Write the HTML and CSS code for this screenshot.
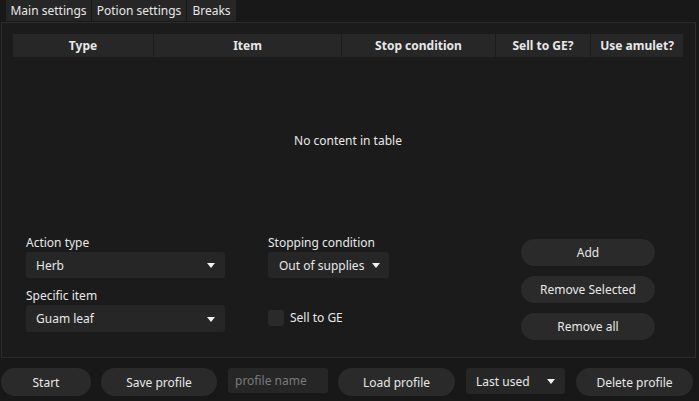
FILE: index.html
```html
<!DOCTYPE html>
<html>
<head>
<meta charset="utf-8">
<link rel="stylesheet" href="styles.css">
</head>
<body>
<div class="tabs">
  <div class="tab t1">Main settings</div>
  <div class="tab t2">Potion settings</div>
  <div class="tab t3">Breaks</div>
</div>
<div class="panel">
  <div class="table">
    <div class="thead">
      <div class="th c1">Type</div>
      <div class="th c2">Item</div>
      <div class="th c3">Stop condition</div>
      <div class="th c4">Sell to GE?</div>
      <div class="th c5">Use amulet?</div>
    </div>
    <div class="tbody">No content in table</div>
  </div>
  <div class="form">
    <div class="col col1">
      <div class="label">Action type</div>
      <div class="select wide"><span>Herb</span><i class="arrow"></i></div>
      <div class="label second">Specific item</div>
      <div class="select wide tall"><span>Guam leaf</span><i class="arrow"></i></div>
    </div>
    <div class="col col2">
      <div class="label">Stopping condition</div>
      <div class="select narrow"><span>Out of supplies</span><i class="arrow"></i></div>
      <div class="check"><span class="box"></span><span>Sell to GE</span></div>
    </div>
    <div class="col col3">
      <div class="btn side">Add</div>
      <div class="btn side">Remove Selected</div>
      <div class="btn side">Remove all</div>
    </div>
  </div>
</div>
<div class="bottom">
  <div class="btn b-start">Start</div>
  <div class="btn b-save">Save profile</div>
  <div class="input">profile name</div>
  <div class="btn b-load">Load profile</div>
  <div class="select last"><span>Last used</span><i class="arrow"></i></div>
  <div class="btn b-del">Delete profile</div>
</div>
</body>
</html>
```
FILE: styles.css
```css
* { box-sizing: border-box; }
html, body { margin: 0; padding: 0; }
body {
  width: 699px;
  height: 401px;
  background: #181818;
  color: #e8e8e8;
  font-family: "Noto Sans", "DejaVu Sans", sans-serif;
  font-size: 12px;
  overflow: hidden;
}
.tabs {
  display: flex;
  height: 22px;
  padding-left: 6px;
  gap: 1px;
}
.tab {
  background: #262626;
  height: 21px;
  line-height: 21px;
  text-align: center;
  white-space: nowrap;
}
.t1 { width: 85px; }
.t2 { width: 94px; }
.t3 { width: 49px; }
.panel {
  margin: 0 3px 0 1px;
  height: 336px;
  border: 1px solid #2c2c2c;
  background: #1b1b1b;
  padding: 11px 12px 0 11px;
}
.thead {
  display: flex;
  height: 23px;
  background: #272727;
  font-weight: bold;
}
.th {
  line-height: 23px;
  text-align: center;
  border-right: 1px solid #1b1b1b;
}
.c1 { width: 141px; }
.c2 { width: 188px; }
.c3 { width: 154px; }
.c4 { width: 95px; }
.c5 { width: 92px; border-right: none; }
.tbody {
  height: 166px;
  display: flex;
  align-items: center;
  justify-content: center;
}
.form {
  display: flex;
  padding: 13px 0 0 13px;
}
.col { display: flex; flex-direction: column; }
.col1 { width: 199px; }
.col2 { margin-left: 43px; width: 200px; }
.col3 { margin-left: 53px; padding-top: 3px; gap: 10px; }
.label { height: 14px; line-height: 14px; margin-bottom: 2px; }
.label.second { margin-top: 11px; }
.select {
  display: flex;
  align-items: center;
  justify-content: space-between;
  background: #262626;
  border-radius: 3px;
  height: 26px;
  padding: 0 10px 0 10px;
}
.select.tall { height: 27px; }
.select.narrow { width: 121px; padding-left: 11px; padding-right: 9px; }
.arrow {
  width: 0; height: 0;
  border-left: 4px solid transparent;
  border-right: 4px solid transparent;
  border-top: 5px solid #f0f0f0;
  margin-top: 1px;
}
.check {
  display: flex;
  align-items: center;
  margin-top: 31px;
  gap: 6px;
}
.box {
  width: 16px; height: 16px;
  background: #2a2a2a;
  border-radius: 3px;
}
.btn {
  display: flex;
  align-items: center;
  justify-content: center;
  background: #2a2a2a;
  border-radius: 14px;
  height: 28px;
}
.btn.side { width: 134px; height: 27px; }
.bottom {
  display: flex;
  align-items: flex-start;
  margin-top: 10px;
  padding-left: 1px;
}
.b-start { width: 90px; }
.b-save { width: 116px; margin-left: 10px; }
.input {
  width: 100px; height: 25px;
  margin-left: 11px;
  background: #262626;
  border-radius: 3px;
  color: #7a7a7a;
  line-height: 25px;
  padding-left: 7px;
}
.b-load { width: 117px; margin-left: 10px; }
.select.last { width: 99px; margin-left: 11px; padding-left: 10px; padding-right: 10px; }
.b-del { width: 117px; margin-left: 11px; }
```
